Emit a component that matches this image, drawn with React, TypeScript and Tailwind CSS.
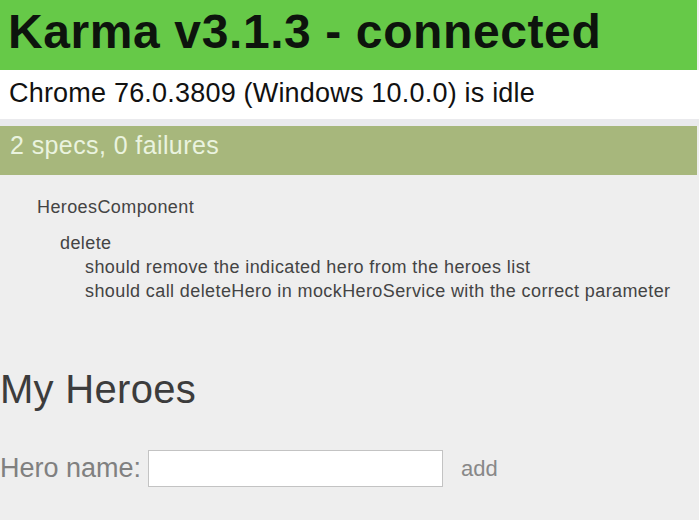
import React from "react";

export default function App() {
  const font = { fontFamily: '"Liberation Sans", Arial, Helvetica, sans-serif' };
  return (
    <div className="w-[699px] h-[520px] overflow-hidden bg-[#eeeeee]" style={font}>
      <div className="w-[697px] h-[70px] bg-[#66c948] pl-[8px]">
        <div className="text-[48px] leading-[63px] font-bold tracking-[0.6px] text-[#0d140d] whitespace-nowrap">
          Karma v3.1.3 - connected
        </div>
      </div>
      <div className="w-[699px] h-[49px] bg-white pl-[9px]">
        <div className="text-[27px] leading-[47px] tracking-[0.2px] text-[#111111] whitespace-nowrap">
          Chrome 76.0.3809 (Windows 10.0.0) is idle
        </div>
      </div>
      <div className="w-[699px] h-[7px] bg-[#eaeaed]" />
      <div className="w-[697px] h-[49px] bg-[#a7b77c] pl-[10px]">
        <div className="text-[25px] leading-[38px] tracking-[0.4px] text-[#eaf3df] whitespace-nowrap">
          2 specs, 0 failures
        </div>
      </div>
      <div className="pt-[20px] text-[18px] leading-[24px] tracking-[0.4px] text-[#444444] whitespace-nowrap">
        <div className="pl-[37px]">HeroesComponent</div>
        <div className="pl-[60px] mt-[12px]">delete</div>
        <div className="pl-[85px]">should remove the indicated hero from the heroes list</div>
        <div className="pl-[85px]">should call deleteHero in mockHeroService with the correct parameter</div>
      </div>
      <div className="mt-[62px] text-[40px] leading-[48px] tracking-[0.3px] text-[#3c3c3c] whitespace-nowrap">
        My Heroes
      </div>
      <div className="mt-[37px] flex items-center h-[37px] whitespace-nowrap">
        <span className="text-[27px] leading-[37px] text-[#808080]">Hero name:</span>
        <input className="ml-[7px] w-[295px] h-[37px] bg-white border border-[#c3c3c3] outline-none" />
        <span className="ml-[18px] text-[22px] leading-[37px] text-[#888888]">add</span>
      </div>
    </div>
  );
}
